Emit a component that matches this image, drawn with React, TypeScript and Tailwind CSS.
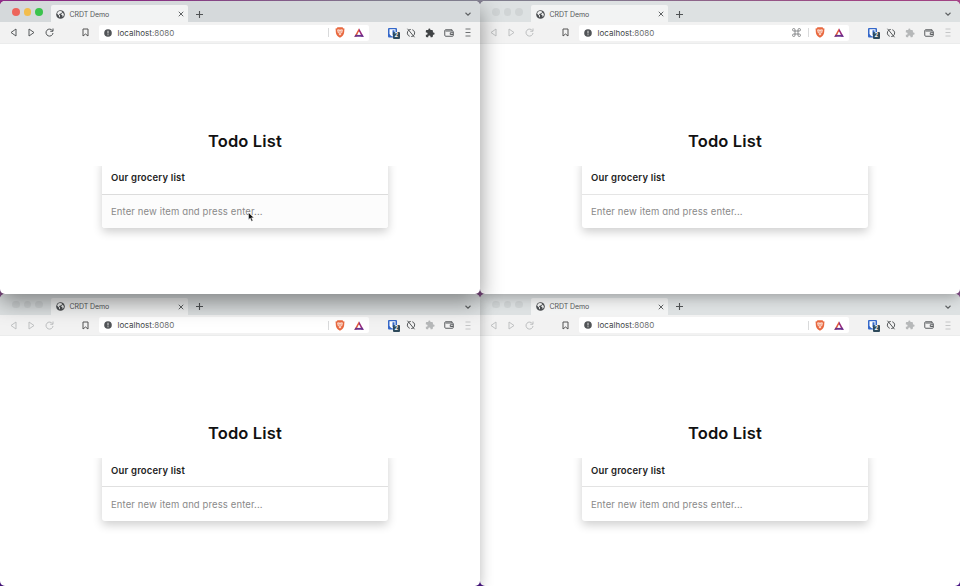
import React from "react";
import { clsx } from "clsx";

type IconProps = { className?: string };

const Globe = () => (
  <svg viewBox="0 0 18 18" className="size-[9px] shrink-0">
    <circle cx="9" cy="9" r="8.6" fill="#4b4e51" />
    <path d="M8 2.2C5 2.5 2.8 4.7 2.3 7.5L6 11.2V13l2 1.8V11l-2-2 1-1.4h2.2V5.8H11L12.4 4 11 2.3zM13.7 5.2l-2.2 2.3h-1v2.2l2.3 1v2.4l1 .6A7 7 0 0 0 15.7 9z" fill="#f2f3f3" />
  </svg>
);
const Back = ({ className }: IconProps) => (
  <svg viewBox="0 0 14 18" className={clsx("h-[9px] w-[7px]", className)} fill="none" stroke="currentColor" strokeWidth="1.9" strokeLinejoin="round"><path d="M12 2v14L2 9z" /></svg>
);
const Reload = ({ className }: IconProps) => (
  <svg viewBox="0 0 18 18" className={clsx("size-[9px]", className)} fill="none" stroke="currentColor" strokeWidth="2"><path d="M15 5.5A7 7 0 1 0 16 10M16 1v5.5h-5.5" /></svg>
);
const Bookmark = () => (
  <svg viewBox="0 0 14 18" className="h-[9px] w-[7px] text-[#555]" fill="none" stroke="currentColor" strokeWidth="2"><path d="M2 2h10v14l-5-4-5 4z" strokeLinejoin="round" /></svg>
);
const Info = () => (
  <svg viewBox="0 0 16 16" className="size-2 shrink-0"><circle cx="8" cy="8" r="7.6" fill="#505356" /><path d="M8 3.5v5.5M8 10.5v2" stroke="#fff" strokeWidth="1.7" /></svg>
);
const Brave = () => (
  <svg viewBox="0 0 20 22" className="h-[11px] w-[10px] shrink-0">
    <path d="M5 0.500h10l2 2.500h2l-.5 4c0 8-2.500 11-8.500 14.500C4 18 1.500 15 1.500 7L1 3h2z" fill="#e8683f" />
    <path d="M4 5.500l3.500-.8 2.500.8 2.500-.8 3.500.8-1.500 6-2.500 1.700.5 2-2.500 2-2.500-2 .5-2L5.500 11.500z" fill="#fbd9cc" />
    <path d="M6.500 8l2.200.8L8 11l2 1.500 2-1.500-.7-2.200 2.200-.8" stroke="#e8683f" strokeWidth="1" fill="none" />
  </svg>
);
const Triangle = () => (
  <svg viewBox="0 0 20 18" className="h-[9px] w-[10px] shrink-0">
    <path d="M10 0.500L0.500 17.500H5L10 8z" fill="#e35a3c" />
    <path d="M10 0.500l9.500 17H15L10 8z" fill="#96287d" />
    <path d="M0.500 17.500l2.500-4h14l2.500 4z" fill="#66328d" />
    <path d="M10 7L13.800 13.500H6.200z" fill="#fff" />
  </svg>
);
const Vault = () => (
  <span className="relative block h-[10px] w-[9px]">
    <svg viewBox="0 0 18 20" className="h-[10px] w-[9px]">
      <rect x="0" y="0" width="18" height="19" rx="2" fill="#3568ca" />
      <path d="M3 2.500h12v8c0 3-3 5-6 6.500C6 15.500 3 13.500 3 10.500z" fill="#fff" />
      <path d="M9 4.500h4V10.500c0 2-2 3.500-4 4.600z" fill="#3568ca" />
    </svg>
    <span className="absolute left-[5.500px] top-[4.500px] flex h-[7px] w-[6.500px] items-center justify-center rounded-[1px] bg-[#2e4a5b] text-[5.5px] font-bold leading-none text-white">2</span>
  </span>
);
const NoSync = () => (
  <svg viewBox="0 0 20 20" className="size-[10px] text-[#55585a]" fill="none" stroke="currentColor" strokeWidth="2">
    <path d="M9.500 2.800A7.200 7.200 0 0 0 5 15.300L7.500 16.500M10.500 17.200A7.200 7.200 0 0 0 15 4.700L12.500 3.500M3 1.500L17 18.500" />
  </svg>
);
const Puzzle = ({ className }: IconProps) => (
  <svg viewBox="0 0 24 24" className={clsx("size-[10px]", className)} fill="currentColor">
    <path d="M20.500 11H19V7c0-1.100-.9-2-2-2h-4V3.500a2.500 2.500 0 0 0-5 0V5H4c-1.100 0-2 .9-2 2v3.800h1.500a2.700 2.700 0 0 1 0 5.400H2V20c0 1.100.9 2 2 2h3.800v-1.500a2.700 2.700 0 0 1 5.400 0V22H17c1.100 0 2-.9 2-2v-4h1.500a2.500 2.500 0 0 0 0-5z" />
  </svg>
);
const Wallet = () => (
  <svg viewBox="0 0 20 16" className="h-2 w-[10px] text-[#5b5e60]" fill="none" stroke="currentColor" strokeWidth="2">
    <path d="M16 4V1.500H3.500a2 2 0 0 0-2 2v9a2 2 0 0 0 2 2H17a1.500 1.500 0 0 0 1.500-1.500V5.500A1.500 1.500 0 0 0 17 4H3" /><path d="M18.500 7.500h-6v3.500h6" />
  </svg>
);
const Menu = ({ className }: IconProps) => (
  <svg viewBox="0 0 12 18" className={clsx("h-[9px] w-[6px]", className)} stroke="currentColor" strokeWidth="1.800"><path d="M1 2h10M1 9h10M1 16h10" /></svg>
);
const Command = () => (
  <svg viewBox="0 0 18 18" className="size-[9px] text-[#727476]" fill="none" stroke="currentColor" strokeWidth="1.600">
    <path d="M6 6H3.500A2.500 2.500 0 1 1 6 3.500v11A2.500 2.500 0 1 1 3.500 12h11a2.500 2.500 0 1 1-2.500 2.500v-11A2.500 2.500 0 1 1 14.500 6z" />
  </svg>
);

const Cell = ({ w, children }: { w: string; children: React.ReactNode }) => (
  <div className={clsx("flex shrink-0 items-center justify-center", w)}>{children}</div>
);

type WindowProps = { active?: boolean; command?: boolean; className: string; divider: string };

function BrowserWindow({ active, command, className, divider }: WindowProps) {
  const tone = active ? "text-[#4f5254]" : "text-[#bcbebf]";
  const light = "size-[7.5px] rounded-full";
  return (
    <section className={clsx("relative flex h-[292.5px] w-[480px] flex-col rounded-[5px] bg-white", className)}>
      <header className={clsx("flex h-[21px] shrink-0 items-end rounded-t-[5px]", active ? "bg-[#d5d9db]" : "bg-[#dde1e2]")}>
        <div className="flex h-full w-[51px] items-center gap-1 pl-3 pt-px">
          <span className={clsx(light, active ? "bg-[#ed655b]" : "bg-[#d0d4d5]")} />
          <span className={clsx(light, active ? "bg-[#f2bd4d]" : "bg-[#d0d4d5]")} />
          <span className={clsx(light, active ? "bg-[#3ac34c]" : "bg-[#d0d4d5]")} />
        </div>
        <div className="flex h-[17px] w-[137px] items-center rounded-t-[2px] bg-[#f2f3f3] pl-[5px] pr-1 pt-px">
          <Globe />
          <span className="ml-[4.5px] flex-1 whitespace-nowrap text-[7px] leading-none tracking-[-0.08px] text-[#55585a]">CRDT Demo</span>
          <svg viewBox="0 0 12 12" className="size-[6px]" stroke="#606365" strokeWidth="2"><path d="M1.500 1.500l9 9M10.500 1.500l-9 9" /></svg>
        </div>
        <div className="flex h-[17px] flex-1 items-center justify-between pl-2 pr-[9px] pt-px">
          <svg viewBox="0 0 14 14" className="size-[7px]" stroke="#505355" strokeWidth="2.200"><path d="M7 0v14M0 7h14" /></svg>
          <svg viewBox="0 0 12 8" className="h-1 w-[6px]" fill="none" stroke="#606365" strokeWidth="2.200"><path d="M1 1.500l5 5 5-5" /></svg>
        </div>
      </header>
      <nav className="flex h-[21.5px] shrink-0 items-center border-b border-[#ebecec] bg-[#f2f2f2] pl-1 pt-px">
        <Cell w="w-[18px]"><Back className={tone} /></Cell>
        <Cell w="w-[18px]"><Back className={clsx("rotate-180", tone)} /></Cell>
        <Cell w="w-[19px]"><Reload className={tone} /></Cell>
        <Cell w="w-[53px]"><Bookmark /></Cell>
        <div className="-ml-[13px] flex h-4 w-[270px] shrink-0 items-center rounded-[2px] bg-white pl-[5px]">
          <Info />
          <span className="ml-[5.500px] flex-1 text-[8px] leading-none tracking-[0.02px] text-[#6c6e70]"><span className="text-[#424547]">localhost</span>:8080</span>
          {command && <Cell w="w-[10px]"><Command /></Cell>}
          <span className="ml-[6px] mr-[6px] h-[9px] w-px bg-[#d9dadb]" />
          <Brave />
          <span className="ml-[9px] mr-[5.5px]"><Triangle /></span>
        </div>
        <div className="ml-[13.5px] flex">
          <Cell w="w-[19px]"><Vault /></Cell>
          <Cell w="w-[19px]"><NoSync /></Cell>
          <Cell w="w-[18px]"><Puzzle className={active ? "text-[#404345]" : "text-[#b6b8b9]"} /></Cell>
          <Cell w="w-[20px]"><Wallet /></Cell>
          <Cell w="w-[18px]"><Menu className={active ? "text-[#606264]" : "text-[#bfc1c2]"} /></Cell>
        </div>
      </nav>
      <main className="flex flex-1 flex-col items-center pl-[10px] pt-[85px] [font-feature-settings:'cv11','ss03']">
        <h1 className="h-[37px] whitespace-nowrap text-[16.5px] font-semibold leading-[25px] tracking-[0.15px] text-[#111]">Todo List</h1>
        <div className="w-[316px] overflow-hidden px-[15px] pb-5">
          <div className="-mt-2 flex h-[70.500px] flex-col rounded-[3px] bg-white shadow-[0_4px_10px_rgba(0,0,0,0.19)]">
            <div className={clsx("flex h-[37px] items-center border-b pl-[9px] pt-[4.5px] text-[9.500px] font-semibold leading-none tracking-[0.18px] text-[#222]", divider)}>
              <span className="whitespace-nowrap">Our grocery list</span>
            </div>
            <div className={clsx("flex flex-1 items-center rounded-b-[3px] pl-[9px] pt-[1.5px] text-[9.500px] leading-none tracking-[0.12px] text-[#8a8a8a]", active && "bg-[#fcfcfc]")}>
              <span className="whitespace-nowrap">Enter new item and press enter...</span>
            </div>
          </div>
        </div>
      </main>
      {active && (
        <svg viewBox="0 0 12 18" className="absolute left-[248px] top-[211px] h-[10px] w-[6.5px]">
          <path d="M1 1v13l3-3 2.500 6 2.500-1-2.500-5.500H11z" fill="#111" stroke="#fff" strokeWidth=".8" />
        </svg>
      )}
    </section>
  );
}

export default function App() {
  return (
    <div className="grid h-[586px] w-[960px] grid-cols-2 grid-rows-[292.5px_292.5px] overflow-hidden bg-[linear-gradient(180deg,transparent_0_4%,#85508a_30%_60%,#4a1684_90%),linear-gradient(90deg,#97308e_0_14%,#8d8a9c_40%_60%,#b04a91_90%)] pt-px font-['Inter','Liberation_Sans',sans-serif]">
      <BrowserWindow active className="z-30 shadow-[0_8px_22px_rgba(0,0,0,0.42)]" divider="border-[#dcdcdc]" />
      <BrowserWindow command className="z-20 shadow-[0_3px_14px_rgba(0,0,0,0.3)]" divider="border-[#e5e5e5]" />
      <BrowserWindow className="z-10 shadow-[0_3px_14px_rgba(0,0,0,0.28)]" divider="border-[#e0e0e0]" />
      <BrowserWindow className="z-0" divider="border-[#e3e3e3]" />
    </div>
  );
}
